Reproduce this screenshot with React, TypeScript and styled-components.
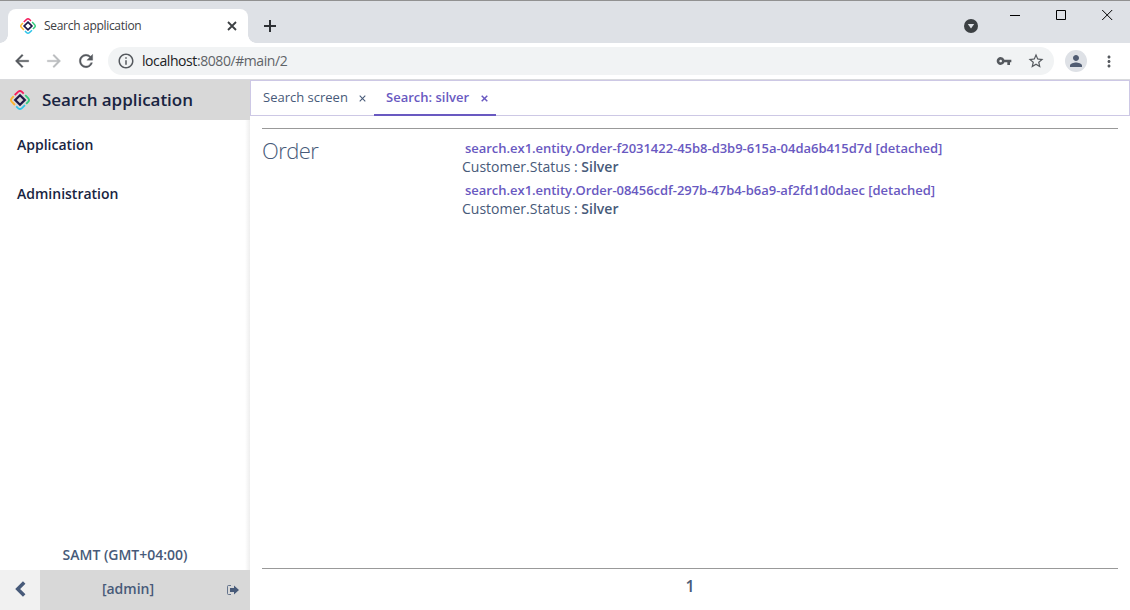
import React from 'react';
import styled, { createGlobalStyle } from 'styled-components';
import { MdArrowBack, MdArrowForward, MdRefresh, MdInfoOutline, MdVpnKey, MdStarBorder, MdPerson, MdMoreVert } from 'react-icons/md';

const Global = createGlobalStyle`
  * { box-sizing: border-box; }
  body { margin: 0; background: #fff; }
  button { border: 0; padding: 0; background: none; font: inherit; color: inherit; }
`;

const Window = styled.div`
  width: 1130px;
  height: 610px;
  display: flex;
  flex-direction: column;
  overflow: hidden;
  color: #475a79;
  font-family: 'Open Sans', 'Noto Sans', sans-serif;
`;

const TabStrip = styled.header`
  flex: none;
  height: 43px;
  display: flex;
  border-top: 1px solid #919191;
  background: #dee1e6;
`;

const BrowserTab = styled.div`
  position: relative;
  width: 240px;
  height: 34px;
  margin: 8px 0 0 8px;
  padding: 0 11px 0 12px;
  display: flex;
  align-items: center;
  border-radius: 8px 8px 0 0;
  background: #fff;
  &::before, &::after {
    content: '';
    position: absolute;
    bottom: 0;
    width: 8px;
    height: 8px;
  }
  &::before { left: -8px; background: radial-gradient(circle at 0 0, transparent 7.5px, #fff 8px); }
  &::after { right: -8px; background: radial-gradient(circle at 100% 0, transparent 7.5px, #fff 8px); }
`;

const BrowserTitle = styled.span`
  flex: 1;
  padding-left: 8px;
  font-size: 12px;
  line-height: 16px;
  letter-spacing: -0.3px;
  color: #3c4043;
`;

const Glyph = styled.svg`
  display: block;
  flex: none;
`;

const NewTab = styled.button`
  margin: 8px 0 0 16px;
  height: 34px;
`;

const WindowControls = styled.div`
  margin-left: auto;
  padding: 8px 17px 0 0;
  display: flex;
  align-items: flex-start;
`;

const Control = styled.button<{ $gap: number; $drop?: number }>`
  margin: ${p => p.$drop ?? 0}px 0 0 ${p => p.$gap}px;
`;

const Toolbar = styled.div`
  flex: none;
  height: 37px;
  padding: 0 12px 0 12px;
  display: flex;
  align-items: center;
  border-bottom: 1px solid #d9dadd;
  color: #55595e;
`;

const NavButton = styled.button<{ $muted?: boolean }>`
  width: 32px;
  height: 20px;
  display: flex;
  color: ${p => (p.$muted ? '#babcbe' : '#55595e')};
  svg { stroke: none; }
  path:not([fill='none']) { stroke: currentColor; stroke-width: 0.4px; }
`;

const Address = styled.div`
  flex: 1;
  height: 28px;
  margin: 0 11px 0 0;
  padding: 0 9px 0 9px;
  display: flex;
  align-items: center;
  border-radius: 14px;
  background: #f1f3f4;
`;

const Url = styled.span`
  flex: 1;
  padding-left: 7px;
  font-size: 14px;
  line-height: 20px;
  letter-spacing: -0.42px;
  color: #5f6368;
  b { font-weight: 400; color: #202124; }
`;

const AddressIcons = styled.div`
  display: flex;
  align-items: center;
  gap: 15px;
`;

const Avatar = styled.div`
  width: 22px;
  height: 22px;
  margin-right: 23px;
  display: flex;
  align-items: center;
  justify-content: center;
  border-radius: 50%;
  background: #dee1e6;
  color: #505c72;
`;

const MoreSlot = styled.div`
  width: 18px;
  margin-left: -10px;
  display: flex;
`;

const Application = styled.div`
  flex: 1;
  display: flex;
  min-height: 0;
`;

const Sidebar = styled.aside`
  width: 250px;
  display: flex;
  flex-direction: column;
  background: linear-gradient(to left, #eeeeee, #fff 5px);
`;

const Brand = styled.div`
  height: 40px;
  padding-left: 10px;
  display: flex;
  align-items: center;
  gap: 12px;
  background: #d8d8d8;
`;

const BrandName = styled.h1`
  margin: 0;
  font-size: 17px;
  font-weight: 600;
  line-height: 24px;
  letter-spacing: -0.03px;
  color: #192441;
`;

const Menu = styled.nav`
  flex: 1;
  display: flex;
  flex-direction: column;
`;

const MenuItem = styled.a`
  height: 49px;
  padding-left: 17px;
  font-size: 14px;
  font-weight: 600;
  line-height: 49px;
  color: #192441;
`;

const TimeZone = styled.div`
  height: 31px;
  font-size: 14px;
  font-weight: 600;
  letter-spacing: -0.02px;
  line-height: 31px;
  text-align: center;
`;

const UserBar = styled.div`
  height: 40px;
  display: flex;
  background: #d8d8d8;
`;

const Collapse = styled.button`
  width: 40px;
  padding-bottom: 3px;
  display: flex;
  align-items: center;
  justify-content: center;
  background: #f1f1f1;
`;

const UserName = styled.span`
  width: 176px;
  font-size: 14px;
  font-weight: 600;
  line-height: 38px;
  text-align: center;
`;

const SignOut = styled.button`
  margin: 0 0 0 11px;
`;

const Main = styled.main`
  flex: 1;
  display: flex;
  flex-direction: column;
`;

const Tabs = styled.div`
  height: 36px;
  display: flex;
  border: 1px solid #cdc8e5;
`;

const Tab = styled.div<{ $active?: boolean; $width: number }>`
  width: ${p => p.$width}px;
  height: 35px;
  padding: 0 8px 0 12px;
  display: flex;
  justify-content: space-between;
  font-size: 13px;
  line-height: 33px;
  font-weight: ${p => (p.$active ? 600 : 400)};
  color: ${p => (p.$active ? '#6959c1' : '#475a79')};
  border-bottom: 2px solid ${p => (p.$active ? '#6959c1' : 'transparent')};
`;

const TabClose = styled.button`
  margin-top: 2px;
`;

const Results = styled.section`
  flex: 1;
  margin: 12px 12px 0;
  display: flex;
  border-top: 1px solid #999;
  border-bottom: 1px solid #999;
`;

const EntityName = styled.h2`
  width: 200px;
  margin: 7px 0 0;
  font-size: 22px;
  font-weight: 300;
  line-height: 29px;
  letter-spacing: -0.6px;
`;

const Hits = styled.div`
  padding-top: 10px;
`;

const Hit = styled.article`
  height: 42px;
`;

const HitLink = styled.a`
  display: block;
  padding-left: 3px;
  font-size: 13px;
  font-weight: 600;
  line-height: 18px;
  letter-spacing: -0.03px;
  color: #6959c1;
`;

const HitField = styled.div`
  font-size: 14px;
  line-height: 19px;
  b { font-weight: 600; }
`;

const Pager = styled.footer`
  height: 41px;
  font-size: 16px;
  font-weight: 600;
  line-height: 35px;
  text-align: center;
`;

const Logo = ({ size }: { size: number }) => (
  <Glyph width={size} height={size} viewBox="0 0 20 20" fill="none" strokeWidth="1.8">
    <path d="M4.7 5 8.3 1.7Q10 .2 11.7 1.7L13.7 3.7" stroke="#f51c5c" />
    <path d="M15.2 5 18.3 8.3Q19.8 10 18.3 11.7L16.2 13.8" stroke="#2fcb7d" />
    <path d="M15 15.2 11.7 18.3Q10 19.8 8.3 18.3L6.2 16.3" stroke="#2fc5e9" />
    <path d="M4.9 15 1.7 11.7Q.2 10 1.7 8.3L3.7 6.2" stroke="#ffb32e" />
    <path d="m10 5.2 4.8 4.8-4.8 4.8L5.2 10z" stroke="#1d1846" strokeWidth="2.2" />
  </Glyph>
);

const Cross = ({ size, weight }: { size: number; weight: number }) => (
  <Glyph width={size} height={size} viewBox="0 0 10 10" fill="none" stroke="currentColor" strokeWidth={weight}>
    <path d="m1 1 8 8M9 1 1 9" />
  </Glyph>
);

const hits = [
  'search.ex1.entity.Order-f2031422-45b8-d3b9-615a-04da6b415d7d [detached]',
  'search.ex1.entity.Order-08456cdf-297b-47b4-b6a9-af2fd1d0daec [detached]',
];

export default function App() {
  return (
    <Window>
      <Global />
      <TabStrip>
        <BrowserTab>
          <Logo size={16} />
          <BrowserTitle>Search application</BrowserTitle>
          <Glyph width="10" height="10" viewBox="0 0 10 10" stroke="#3c4043" strokeWidth="1.8"><path d="m1 1 8 8M9 1 1 9" /></Glyph>
        </BrowserTab>
        <NewTab aria-label="New tab">
          <Glyph width="12" height="12" viewBox="0 0 12 12" stroke="#2d3034" strokeWidth="2"><path d="M6 0v12M0 6h12" /></Glyph>
        </NewTab>
        <WindowControls>
          <Control $gap={0} $drop={10} aria-label="Search tabs">
            <Glyph width="14" height="14" viewBox="0 0 14 14"><circle cx="7" cy="7" r="7" fill="#3c4043" /><path d="M3.8 5h6.4L7 9.5z" fill="#dee1e6" /></Glyph>
          </Control>
          <Control $gap={32} aria-label="Minimize">
            <Glyph width="10" height="12" viewBox="0 0 10 12"><path d="M0 6h10v1H0z" /></Glyph>
          </Control>
          <Control $gap={36} aria-label="Maximize">
            <Glyph width="10" height="12" viewBox="0 0 10 12" fill="none" stroke="#000"><path d="M.5 1.5h9v9h-9z" /></Glyph>
          </Control>
          <Control $gap={36} aria-label="Close">
            <Glyph width="11" height="12" viewBox="0 0 11 12" fill="none" stroke="#000"><path d="m.2 1 10 10M10.2 1l-10 10" /></Glyph>
          </Control>
        </WindowControls>
      </TabStrip>

      <Toolbar>
        <NavButton aria-label="Back"><MdArrowBack size={20} /></NavButton>
        <NavButton $muted aria-label="Forward"><MdArrowForward size={20} /></NavButton>
        <NavButton aria-label="Reload"><MdRefresh size={20} /></NavButton>
        <Address>
          <MdInfoOutline size={18} />
          <Url><b>localhost</b>:8080/#main/2</Url>
          <AddressIcons>
            <MdVpnKey size={16} />
            <MdStarBorder size={18} />
          </AddressIcons>
        </Address>
        <Avatar><MdPerson size={18} /></Avatar>
        <MoreSlot><MdMoreVert size={19} /></MoreSlot>
      </Toolbar>

      <Application>
        <Sidebar>
          <Brand><Logo size={20} /><BrandName>Search application</BrandName></Brand>
          <Menu>
            <MenuItem>Application</MenuItem>
            <MenuItem>Administration</MenuItem>
          </Menu>
          <TimeZone>SAMT (GMT+04:00)</TimeZone>
          <UserBar>
            <Collapse aria-label="Collapse menu">
              <Glyph width="11" height="16" viewBox="0 0 11 16" fill="none" stroke="currentColor" strokeWidth="3.5"><path d="M9.2 1.5 2.7 8 9.2 14.5" /></Glyph>
            </Collapse>
            <UserName>[admin]</UserName>
            <SignOut aria-label="Sign out">
              <Glyph width="12" height="10" viewBox="0 0 12 10">
                <path d="M4 .5H1.5Q.5.5.5 1.5v7q0 1 1 1H4" fill="none" stroke="currentColor" strokeWidth=".8" />
                <path d="M3 3h4V.5L12 5 7 9.5V7H3z" fill="currentColor" />
              </Glyph>
            </SignOut>
          </UserBar>
        </Sidebar>

        <Main>
          <Tabs>
            <Tab $width={123}>Search screen<TabClose aria-label="Close tab"><Cross size={7} weight={1.5} /></TabClose></Tab>
            <Tab $width={122} $active>Search: silver<TabClose aria-label="Close tab"><Cross size={7} weight={2.1} /></TabClose></Tab>
          </Tabs>
          <Results>
            <EntityName>Order</EntityName>
            <Hits>
              {hits.map(name => (
                <Hit key={name}>
                  <HitLink>{name}</HitLink>
                  <HitField>Customer.Status : <b>Silver</b></HitField>
                </Hit>
              ))}
            </Hits>
          </Results>
          <Pager>1</Pager>
        </Main>
      </Application>
    </Window>
  );
}
